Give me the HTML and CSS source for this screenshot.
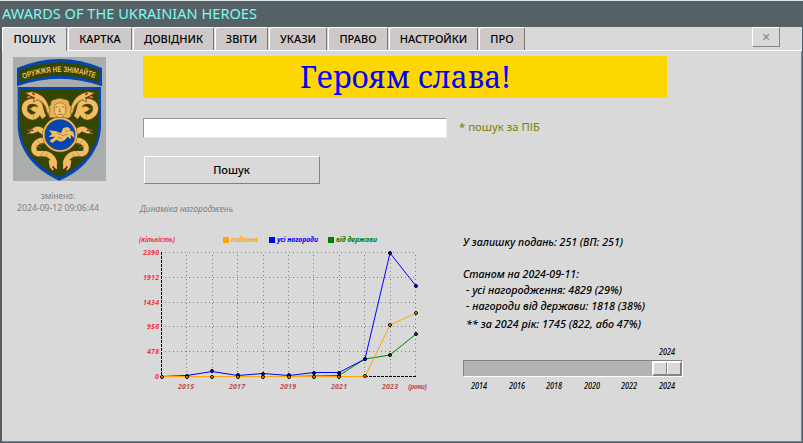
FILE: index.html
```html
<!DOCTYPE html>
<html lang="uk">
<head>
<meta charset="utf-8">
<title>Awards of the Ukrainian Heroes</title>
<link rel="stylesheet" href="styles.css">
</head>
<body>
<div class="window">
  <header class="titlebar"><svg width="270" height="26"><text x="2" y="18" textLength="255" lengthAdjust="spacingAndGlyphs">AWARDS OF THE UKRAINIAN HEROES</text></svg></header>
  <div class="client">
    <nav class="tabs">
      <div class="tab active">ПОШУК</div><div class="tab">КАРТКА</div><div class="tab">ДОВІДНИК</div><div class="tab">ЗВІТИ</div><div class="tab">УКАЗИ</div><div class="tab">ПРАВО</div><div class="tab">НАСТРОЙКИ</div><div class="tab">ПРО</div>
      <button class="close">✕</button>
    </nav>
    <main class="page">
      <aside class="side">
        <svg class="emblem" viewBox="0 0 279 372">
          <defs>
            <path id="motto" d="M31 66Q140 24 253 66"/>
            <g id="snake">
              <path d="M94 181C79 166 88 142 73 136C53 127 34 137 34 155C35 174 57 189 72 174C82 163 67 148 58 161" fill="none" stroke="#614719" stroke-width="19"/>
              <path d="M94 181C79 166 88 142 73 136C53 127 34 137 34 155C35 174 57 189 72 174C82 163 67 148 58 161" fill="none" stroke="#f1bd61" stroke-width="15"/>
              <path d="M112 177C97 172 105 151 89 139L75 128L61 134L65 121L39 123L48 115L37 107L57 104L73 109L87 117C107 132 103 151 121 165Z" fill="#f1bd61" stroke="#614719" stroke-width="2"/>
              <path d="M43 114L59 120M58 109L65 113" stroke="#8c1820" stroke-width="4"/>
              <path d="M101 218C83 210 72 201 58 215L42 218L53 224L39 230L60 230L75 224L94 238Z" fill="#f1bd61" stroke="#614719" stroke-width="2"/>
              <path d="M48 218L61 221" stroke="#8c1820" stroke-width="4"/>
              <path d="M107 258C89 239 57 258 63 280C70 300 89 283 106 293C119 300 124 310 124 322" fill="none" stroke="#614719" stroke-width="20"/>
              <path d="M107 258C89 239 57 258 63 280C70 300 89 283 106 293C119 300 124 310 124 322" fill="none" stroke="#f1bd61" stroke-width="16"/>
              <path d="M107 311L110 330L119 341L124 332L132 337L131 316L120 305Z" fill="#f1bd61"/>
              <path d="M119 328L125 337" stroke="#8c1820" stroke-width="5"/>
              <path d="M80 130C101 139 93 160 108 171M41 158Q49 151 57 157M51 173Q65 168 61 183M68 264L84 273M74 252L88 266M91 284L83 297M103 290L95 302" fill="none" stroke="#a87832" stroke-width="2"/>
            </g>
          </defs>
          <path d="M14 90H264V205C264 285 205 344 139 371C72 343 14 284 14 205Z" fill="#0446b5"/>
          <path d="M21 98H257V205C257 280 199 333 139 361C78 333 21 280 21 205Z" fill="#354600"/>
          <path d="M12 33Q140 -21 267 33V88Q140 43 12 88Z" fill="#0446b5"/>
          <path d="M20 38Q140 -7 259 38V77Q140 36 20 77Z" fill="#354600"/>
          <text class="motto"><textPath href="#motto" textLength="219" lengthAdjust="spacingAndGlyphs">ОРУЖЖЯ НЕ ЗНІМАЙТЕ</textPath></text>
          <use href="#snake"/><use href="#snake" transform="matrix(-1 0 0 1 282 0)"/>
          <path d="M110 182Q104 171 111 161Q104 151 113 143Q112 128 128 127Q140 121 153 127Q171 128 169 143Q180 151 172 163Q180 177 166 184Z" fill="#e9b256" stroke="#76531e" stroke-width="2"/>
          <path d="M124 145Q140 129 158 145V166Q151 180 141 183Q127 177 124 166Z" fill="#f4c772" stroke="#94662b" stroke-width="2"/>
          <path d="M127 151L136 149M146 149L155 151M141 153L138 164H144M134 172H149" fill="none" stroke="#76531e" stroke-width="2"/>
          <circle cx="141" cy="233" r="49" fill="#0446b5" stroke="#76531e" stroke-width="8"/>
          <circle cx="141" cy="233" r="49" fill="none" stroke="#f1bd61" stroke-width="5"/>
          <path d="M110 251L127 239L107 240L117 231L108 220L127 222L144 228L151 213L163 210L174 217L168 220L181 224L185 244L173 233L174 247L164 239L155 250L143 254L130 248L118 258Z" fill="#f1bd61"/>
          <path d="M132 228L151 236L164 231M134 241L148 245M156 222L165 223" fill="none" stroke="#93672e" stroke-width="2"/>
        </svg>
        <svg class="modified" width="106" height="32"><text x="31" y="14" textLength="34" lengthAdjust="spacingAndGlyphs">змінено:</text><text x="7" y="26" textLength="82" lengthAdjust="spacingAndGlyphs">2024-09-12 09:06:44</text></svg>
      </aside>
      <section class="content">
        <h1 class="banner"><svg width="524" height="42"><text x="157" y="32" textLength="211" lengthAdjust="spacingAndGlyphs">Героям слава!</text></svg></h1>
        <div class="search-row"><input class="query" type="text" aria-label="ПІБ"><svg class="hint" width="84" height="20"><text x="0" y="13" textLength="81" lengthAdjust="spacingAndGlyphs">* пошук за ПІБ</text></svg></div>
        <button class="search">Пошук</button>
        <svg class="caption" width="110" height="18"><text x="1" y="13" textLength="93" lengthAdjust="spacingAndGlyphs">Динаміка нагороджень</text></svg>
        <div class="lower">
          <svg class="chart" viewBox="138 232 292 162">
            <g class="grid">
              <path d="M165 252.5H416M165 277.5H416M165 302.5H416M165 326.5H416M165 351.5H416"/>
              <path d="M186.5 255V376M212.5 255V376M237.5 255V376M263.5 255V376M288.5 255V376M313.5 255V376M339.5 255V376M364.5 255V376M390.5 255V376M415.5 255V376"/>
            </g>
            <path class="axis" d="M161.5 252V376M161 376.5H416"/>
            <polyline class="state" points="162,376.5 289,376.5 313,376 339,375.5 365,359 390,355 416,334"/>
            <polyline class="all" points="162,376.5 187,375.5 212,371.5 238,375.5 263,373.5 289,375.5 314,372.5 339,372.5 365,359 390,253 416,286"/>
            <polyline class="submit" points="162,376.5 365,376.5 390,325 416,313"/>
            <g class="dots green"><circle cx="339" cy="376" r="1.5"/><circle cx="365" cy="359" r="1.5"/><circle cx="390" cy="355" r="1.5"/><circle cx="416" cy="334" r="1.5"/></g>
            <g class="dots blue"><circle cx="187" cy="376" r="1.5"/><circle cx="212" cy="371" r="1.5"/><circle cx="238" cy="375" r="1.5"/><circle cx="263" cy="374" r="1.5"/><circle cx="289" cy="375" r="1.5"/><circle cx="314" cy="373" r="1.5"/><circle cx="339" cy="373" r="1.5"/><circle cx="365" cy="359" r="1.5"/><circle cx="390" cy="253" r="1.5"/><circle cx="416" cy="286" r="1.5"/></g>
            <g class="dots orange"><circle cx="162" cy="377" r="1.5"/><circle cx="187" cy="377" r="1.5"/><circle cx="212" cy="377" r="1.5"/><circle cx="238" cy="377" r="1.5"/><circle cx="263" cy="377" r="1.5"/><circle cx="289" cy="377" r="1.5"/><circle cx="314" cy="377" r="1.5"/><circle cx="339" cy="377" r="1.5"/><circle cx="365" cy="376" r="1.5"/><circle cx="390" cy="325" r="1.5"/><circle cx="416" cy="313" r="1.5"/></g>
            <g class="ylabels">
              <text x="139" y="242" textLength="36" lengthAdjust="spacingAndGlyphs">(кількість)</text>
              <text x="143" y="255" textLength="16">2390</text><text x="143" y="280" textLength="16">1912</text><text x="143" y="305" textLength="16">1434</text><text x="147" y="329" textLength="12">956</text><text x="147" y="354" textLength="12">478</text><text x="155" y="379">0</text>
            </g>
            <g class="xlabels"><text x="178" y="389" textLength="16">2015</text><text x="229" y="389" textLength="16">2017</text><text x="280" y="389" textLength="16">2019</text><text x="331" y="389" textLength="16">2021</text><text x="382" y="389" textLength="16">2023</text><text x="408" y="389" textLength="19">(роки)</text></g>
            <rect x="223" y="237" width="6" height="6" fill="orange"/><text class="lo" x="231" y="242" textLength="27" lengthAdjust="spacingAndGlyphs">подання</text>
            <rect x="269" y="237" width="6" height="6" fill="blue"/><text class="lb" x="277" y="242" textLength="41" lengthAdjust="spacingAndGlyphs">усі нагороди</text>
            <rect x="328" y="237" width="6" height="6" fill="green"/><text class="lg" x="336" y="242" textLength="41" lengthAdjust="spacingAndGlyphs">від держави</text>
          </svg>
          <div class="summary">
            <svg class="stats" viewBox="463 232 227 104">
              <text x="463" y="246" textLength="160" lengthAdjust="spacingAndGlyphs">У залишку подань: 251 (ВП: 251)</text>
              <text x="463" y="278" textLength="116" lengthAdjust="spacingAndGlyphs">Станом на 2024-09-11:</text>
              <text x="466" y="294" textLength="156" lengthAdjust="spacingAndGlyphs">- усі нагородження: 4829 (29%)</text>
              <text x="466" y="310" textLength="179" lengthAdjust="spacingAndGlyphs">- нагороди від держави: 1818 (38%)</text>
              <text x="466" y="328" textLength="175" lengthAdjust="spacingAndGlyphs">** за 2024 рік: 1745 (822, або 47%)</text>
            </svg>
            <svg class="value" width="220" height="24"><text x="196" y="19" textLength="16" lengthAdjust="spacingAndGlyphs">2024</text></svg>
            <div class="slider"><div class="thumb"><i></i><i></i></div></div>
            <svg class="ticks" width="220" height="16"><text x="8" y="11" textLength="16" lengthAdjust="spacingAndGlyphs">2014</text><text x="46" y="11" textLength="16" lengthAdjust="spacingAndGlyphs">2016</text><text x="83" y="11" textLength="16" lengthAdjust="spacingAndGlyphs">2018</text><text x="121" y="11" textLength="16" lengthAdjust="spacingAndGlyphs">2020</text><text x="158" y="11" textLength="16" lengthAdjust="spacingAndGlyphs">2022</text><text x="196" y="11" textLength="16" lengthAdjust="spacingAndGlyphs">2024</text></svg>
          </div>
        </div>
      </section>
    </main>
  </div>
</div>
</body>
</html>
```
FILE: styles.css
```css
* { box-sizing: border-box; }
body { margin: 0; font: 11px "Noto Sans", sans-serif; color: #000; overflow: hidden; }
svg { display: block; }
.window { width: 803px; height: 443px; background: #566166; border-top: 1px solid #dfe6ea; }
.titlebar { height: 26px; }
.titlebar text { font-size: 15px; fill: #7df9f0; }
.client { margin: 0 1px 0 2px; height: 415px; background: #d9d9d9; border-bottom: 1px solid #838383; }
.tabs { display: grid; grid-template-columns: 65px 65px 82px 54px 59px 61px 90px 47px 1fr; height: 24px; border-bottom: 1px solid #fff; }
.tab { margin-left: 1px; height: 23px; background: #cec9c8; border: solid #fff; border-width: 1px 1px 0; border-right-color: #777; border-radius: 3px 3px 0 0; text-align: center; line-height: 22px; font-size: 11px; font-weight: 500; white-space: nowrap; }
.tab.active { margin-left: 0; height: 24px; background: #d9d9d9; }
.close { justify-self: end; margin-right: 22px; width: 28px; height: 20px; padding: 0; border: 1px solid #fff; border-right-color: #838383; border-bottom-color: #838383; background: #d9d9d9; color: #858585; font: bold 11px "DejaVu Sans", sans-serif; }
.page { display: flex; padding-top: 5px; height: 390px; border-right: 1px solid #838383; }
.side { width: 141px; padding: 1px 0 0 11px; }
.emblem { width: 93px; height: 124px; background: #a9adac; }
.motto { font: bold 24px "Liberation Sans", sans-serif; fill: #f1bd61; }
.modified { margin: 4px 0 0 -3px; }
.modified text { font-size: 9px; fill: #808080; }
.content { flex: 1; display: flex; flex-direction: column; }
.banner { margin: 0; width: 524px; height: 42px; background: #ffd700; }
.banner text { font: 31px "Noto Serif", Gelasio, Georgia, "Liberation Serif", serif; fill: #00f; }
.search-row { display: flex; align-items: center; gap: 12px; margin-top: 20px; height: 20px; }
.query { width: 304px; height: 20px; background: #fff; border: 1px solid #eee; border-top-color: #969696; border-left-color: #969696; padding: 0 3px; }
.hint text { font-size: 11px; fill: #808000; }
.search { margin: 18px 0 0 1px; width: 176px; height: 28px; border: 1px solid #fff; border-right-color: #838383; border-bottom-color: #838383; background: #d9d9d9; font: 500 11px "Noto Sans", sans-serif; color: #000; padding: 0 1px 1px 0; }
.caption { margin: 15px 0 0 -4px; }
.caption text { font-size: 9px; font-style: italic; fill: #808080; }
.lower { display: flex; margin: 15px 0 0 -5px; }
.chart { width: 292px; height: 162px; font: italic bold 7px "Noto Sans", sans-serif; }
.grid path { stroke: #808080; stroke-dasharray: 1 3; fill: none; }
.axis { stroke: #000; stroke-dasharray: 3 1; fill: none; }
.chart polyline { fill: none; stroke-width: 1; }
.state { stroke: green; }
.all { stroke: blue; }
.submit { stroke: orange; }
.dots { stroke: #000; }
.green { fill: green; }
.blue { fill: blue; }
.orange { fill: orange; }
.ylabels { fill: #f03737; }
.xlabels { fill: #bc5050; }
.lo { fill: orange; }
.lb { fill: blue; }
.lg { fill: green; }
.summary { width: 227px; margin-left: 33px; }
.stats { width: 227px; height: 104px; font: italic 500 11px "Noto Sans", sans-serif; }
.value, .ticks { font: italic 500 8.5px "Noto Sans", sans-serif; }
.slider { width: 220px; height: 17px; background: #b3b3b3; border: 1px solid #838383; border-right-color: #fff; border-bottom-color: #fff; display: flex; justify-content: flex-end; }
.thumb { width: 30px; height: 15px; background: #d9d9d9; border: 1px solid #fff; border-right-color: #838383; border-bottom-color: #838383; display: flex; }
.thumb i { flex: 1; border: 1px solid #fff; border-right-color: #838383; border-bottom-color: #838383; }
.ticks { margin-top: 1px; }
```
